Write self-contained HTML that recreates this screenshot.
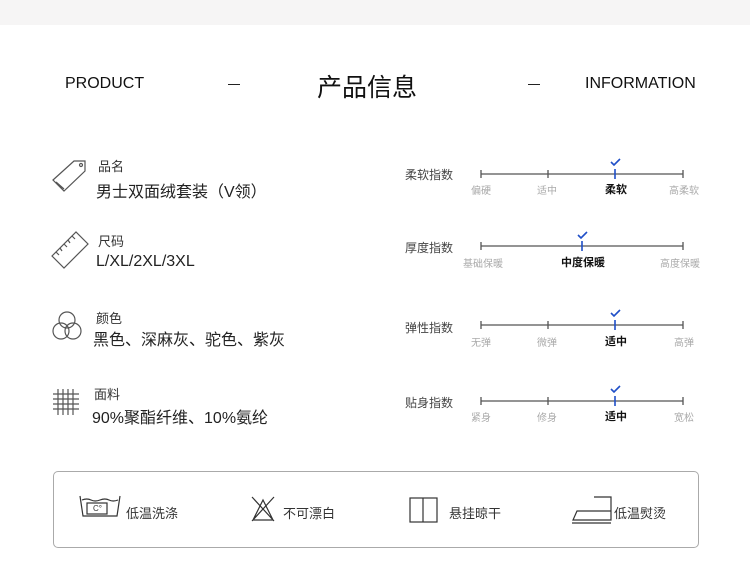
<!DOCTYPE html><html><head><meta charset="utf-8"><style>
body{margin:0;width:750px;height:561px;background:#fff;position:relative;overflow:hidden;font-family:"Liberation Sans","Noto Sans CJK SC",sans-serif;color:#222}
.a{position:absolute;white-space:nowrap}
.t{font-size:13px;color:#333}
.v{font-size:16px;color:#222}
.s{font-size:12px;color:#444}
.g{font-size:10px;color:#aaa;transform:translateX(-50%)}
.b{font-size:11px;color:#111;font-weight:bold;transform:translateX(-50%)}
.c{font-size:13px;color:#333}
</style></head><body>
<div class="a" style="left:0;top:0;width:750px;height:25px;background:#f6f5f5"></div>
<div class="a" style="left:65px;top:75px;font-size:16px;color:#111">PRODUCT</div>
<div class="a" style="left:228px;top:84px;width:12px;height:1px;background:#222"></div>
<div class="a" style="left:317px;top:68px;font-size:25px;color:#111">产品信息</div>
<div class="a" style="left:528px;top:84px;width:12px;height:1px;background:#222"></div>
<div class="a" style="left:585px;top:75px;font-size:16px;color:#111">INFORMATION</div>

<svg class="a" style="left:50px;top:158px" width="40" height="40" viewBox="0 0 40 40" fill="none" stroke="#555" stroke-width="1.2"><path d="M3 22 L24 3 L35 3 L35 13 L14 33 Z M6 24 L14 31"/><circle cx="31" cy="7" r="1.5"/></svg>
<div class="a t" style="left:98px;top:156px">品名</div>
<div class="a v" style="left:96px;top:178px">男士双面绒套装（V领）</div>

<svg class="a" style="left:50px;top:230px" width="40" height="40" viewBox="0 0 40 40" fill="none" stroke="#555" stroke-width="1.2"><path d="M2 26 L26 2 L38 14 L14 38 Z M6 22 L9 25 M10 18 L12 21 M14 14 L17 17 M18 10 L20 13 M22 6 L25 9"/></svg>
<div class="a t" style="left:98px;top:231px">尺码</div>
<div class="a v" style="left:96px;top:253px">L/XL/2XL/3XL</div>

<svg class="a" style="left:50px;top:310px" width="34" height="34" viewBox="0 0 34 34" fill="none" stroke="#555" stroke-width="1.2"><circle cx="17" cy="10" r="8"/><circle cx="11" cy="21" r="8"/><circle cx="23" cy="21" r="8"/></svg>
<div class="a t" style="left:96px;top:308px">颜色</div>
<div class="a v" style="left:93px;top:326px">黑色、深麻灰、驼色、紫灰</div>

<svg class="a" style="left:52px;top:388px" width="28" height="28" viewBox="0 0 28 28" stroke="#555" stroke-width="1.2"><path d="M6 1V27M11 1V27M16 1V27M21 1V27M1 6H27M1 11H27M1 16H27M1 21H27"/></svg>
<div class="a t" style="left:94px;top:384px">面料</div>
<div class="a v" style="left:92px;top:404px">90%聚酯纤维、10%氨纶</div>

<svg class="a" style="left:0;top:0" width="750" height="440" fill="none" stroke-width="1.3">
<g stroke="#555"><path d="M481 174H683M481 170v8M548 170v8M683 170v8"/>
<path d="M481 246H683M481 242v8M683 242v8"/>
<path d="M481 325H683M481 321v8M548 321v8M683 321v8"/>
<path d="M481 401H683M481 397v8M548 397v8M683 397v8"/></g>
<g stroke="#1f4fc8" stroke-width="1.6"><path d="M615 169v10M582 241v10M615 320v10M615 396v10"/>
<path d="M611 162l3 3 6-6M578 235l3 3 6-6M611 313l3 3 6-6M611 389l3 3 6-6"/></g>
</svg>
<div class="a s" style="left:405px;top:166px">柔软指数</div>
<div class="a g" style="left:481px;top:182px">偏硬</div><div class="a g" style="left:547px;top:182px">适中</div><div class="a b" style="left:616px;top:181px">柔软</div><div class="a g" style="left:684px;top:182px">高柔软</div>
<div class="a s" style="left:405px;top:239px">厚度指数</div>
<div class="a g" style="left:483px;top:255px">基础保暖</div><div class="a b" style="left:583px;top:254px">中度保暖</div><div class="a g" style="left:680px;top:255px">高度保暖</div>
<div class="a s" style="left:405px;top:319px">弹性指数</div>
<div class="a g" style="left:481px;top:334px">无弹</div><div class="a g" style="left:547px;top:334px">微弹</div><div class="a b" style="left:616px;top:333px">适中</div><div class="a g" style="left:684px;top:334px">高弹</div>
<div class="a s" style="left:405px;top:394px">贴身指数</div>
<div class="a g" style="left:481px;top:409px">紧身</div><div class="a g" style="left:547px;top:409px">修身</div><div class="a b" style="left:616px;top:408px">适中</div><div class="a g" style="left:684px;top:409px">宽松</div>

<div class="a" style="left:53px;top:471px;width:644px;height:75px;border:1px solid #aaa;border-radius:5px"></div>
<svg class="a" style="left:0;top:0" width="750" height="561" fill="none" stroke="#333" stroke-width="1.2">
<path d="M80 496l3 20h34l3-20M82 500q5-2 9 0t9 0 9 0 9 0"/><rect x="87" y="503" width="20" height="11"/>
<path d="M252 497l22 24M274 497l-22 24M253 520l10-20 10 20z"/>
<rect x="410" y="498" width="27" height="24"/><path d="M423 498v24"/>
<path d="M594 497h17v23h-38l4-9h34M572 523h39"/>
</svg>
<div class="a" style="left:93px;top:504px;font-size:8px;color:#333">C°</div>
<div class="a c" style="left:126px;top:503px">低温洗涤</div>
<div class="a c" style="left:283px;top:503px">不可漂白</div>
<div class="a c" style="left:449px;top:503px">悬挂晾干</div>
<div class="a c" style="left:614px;top:503px">低温熨烫</div>
</body></html>
